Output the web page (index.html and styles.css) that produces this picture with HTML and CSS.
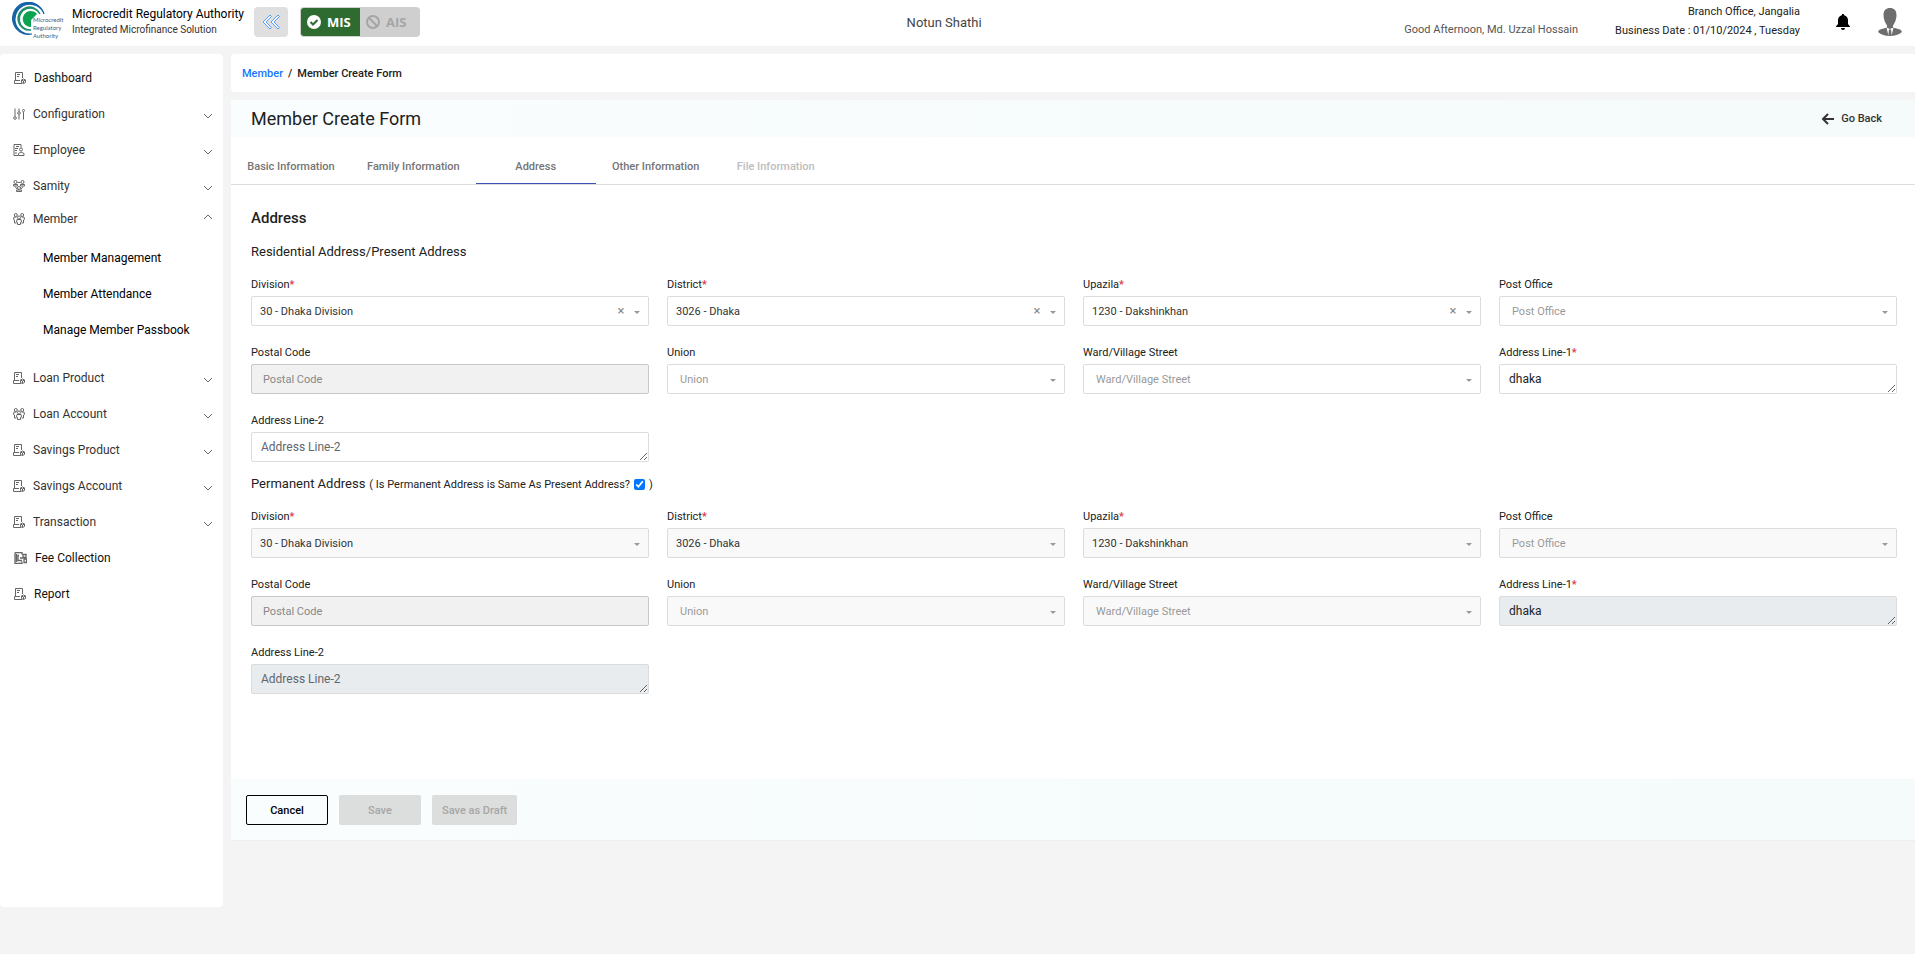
FILE: index.html
```
<!DOCTYPE html>
<html lang="en">
<head>
<meta charset="UTF-8">
<meta name="viewport" content="width=device-width, initial-scale=1.0">
<title>Member Create Form</title>
<link rel="stylesheet" href="styles.css">
</head>
<body>
    <!-- Icons shared by the menu -->
    <svg class="sprite" aria-hidden="true">
        <symbol id="i-doc" viewBox="0 0 12 12">
            <path d="M1.500 8V.5h7V6M.5 8.500v3H8M.5 8.500h5.500M3 2.500h3M3 4.500h2"/>
            <path d="M9.500 7l2 1v2.500l-2 1-2-1V8zM7.500 8l2 1 2-1M9.500 9v2.500"/>
        </symbol>
        <symbol id="i-sliders" viewBox="0 0 12 12">
            <path d="M2 .5v8M6 .5v3M6 6.500v5M10.500 4v7.500"/>
            <circle cx="2" cy="10" r="1.300"/><circle cx="6" cy="5" r="1.300"/><circle cx="10.500" cy="2.500" r="1"/>
        </symbol>
        <symbol id="i-employee" viewBox="0 0 12 12">
            <path d="M1 .5h7v3M1 .5v11h4M3 2.500h3M2 4.500h3M2 6.500h2M2 9h2"/>
            <circle cx="8" cy="5.500" r="1.500"/><path d="M5.500 11.500v-2l2.500-1.500 3 1.500v2z"/>
        </symbol>
        <symbol id="i-samity" viewBox="0 0 12 12">
            <circle cx="2.500" cy="2" r="1.500"/><circle cx="9.500" cy="2" r="1.500"/><circle cx="6" cy="8" r="1.500"/>
            <path d="M.5 6V4.500h4V6zM7.500 6V4.500h4V6zM3.500 11.500V10h5v1.500zM4.500 2.500h3M2 6.500l2 2.500M10 6.500L8 9"/>
        </symbol>
        <symbol id="i-people" viewBox="0 0 12 12">
            <circle cx="2.800" cy="2" r="1.500"/><circle cx="9.200" cy="2" r="1.500"/><circle cx="6" cy="4.500" r="1.500"/>
            <path d="M3.500 10h-2V7L.5 6.500 1 4h2.500M8.500 10h2V7l1-.5L11 4H8.500M4 6.500h4l.5 2.500-1 .5v2h-3v-2l-1-.5z"/>
        </symbol>
        <symbol id="i-fee" viewBox="0 0 13 12">
            <path d="M1 .5h7v2M1 .5v11h7v-2M2.500 2v8M5 3.500H4v5h4M6 6h3M9 2.500h3v3H9zM10 7h2.500v3.500H10z" stroke-width="1.300"/>
        </symbol>
        <symbol id="i-down" viewBox="0 0 10 6">
            <path d="M1 1l4 4 4-4"/>
        </symbol>
    </svg>

    <header class="topbar">
        <svg class="logo" viewBox="0 0 54 40" role="img" aria-label="Microcredit Regulatory Authority">
            <path d="M32 12A16 16 0 1 0 20 32A15 15 0 1 1 32 12z" fill="#1762a8" stroke="#1762a8" stroke-width="1.200"/>
            <path d="M28 12A11.500 11.500 0 1 0 19 28A11 11 0 1 1 28 12z" fill="#1d8f6a" stroke="#1d8f6a" stroke-width="1.400"/>
            <path d="M25 12A8 8 0 1 0 19 25V18z" fill="#0aa34f"/>
            <text x="21" y="20">Microcredit</text>
            <text x="21" y="28">Regulatory</text>
            <text x="21" y="36">Authority</text>
        </svg>
        <div class="brand">
            <div class="brand-name">Microcredit Regulatory Authority</div>
            <div class="brand-sub">Integrated Microfinance Solution</div>
        </div>
        <button class="collapse" type="button" aria-label="Collapse menu">
            <svg viewBox="0 0 20 16"><path d="M9 1L2 8l7 7 1.500-1.500L5 8l5.500-5.500zM17 1l-7 7 7 7 1.500-1.500L13 8l5.500-5.500z"/></svg>
        </button>
        <div class="modes">
            <button class="mode active" type="button">
                <svg viewBox="0 0 14 14"><circle cx="7" cy="7" r="7" fill="#fff"/><path d="M3.500 7l2.500 2.500 4.500-4.500" fill="none" stroke="#2e6b30" stroke-width="2"/></svg>
                MIS
            </button>
            <button class="mode" type="button" disabled>
                <svg viewBox="0 0 14 14" fill="none" stroke="#a5a5a5" stroke-width="2"><circle cx="7" cy="7" r="6"/><path d="M3 3l8 8"/></svg>
                AIS
            </button>
        </div>
        <div class="org">Notun Shathi</div>
        <div class="greeting">Good Afternoon, Md. Uzzal Hossain</div>
        <div class="office">
            <div>Branch Office, Jangalia</div>
            <div>Business Date : 01/10/2024 , Tuesday</div>
        </div>
        <button class="icon-btn bell" type="button" aria-label="Notifications">
            <svg viewBox="0 0 14 16"><path d="M7 0c.7 0 1.200.5 1.200 1.200C10.500 1.800 12 3.700 12 6v4l2 2.500V13H0v-.5L2 10V6c0-2.300 1.500-4.200 3.800-4.800C5.800.5 6.300 0 7 0zM5 14h4a2 2 0 0 1-4 0z"/></svg>
        </button>
        <button class="icon-btn avatar" type="button" aria-label="Account">
            <svg viewBox="0 0 24 28"><path d="M12 0c4 0 6.500 2.500 6.500 7 0 4-1.500 8-3.500 10.500v2l7 2c1 .5 1.500 1.500 2 2.500-3 2.500-7 4-12 4S3 26.500 0 24c.5-1 1-2 2-2.500l7-2v-2C7 15 5.500 11 5.500 7 5.500 2.500 8 0 12 0z"/><path d="M8.500 19.500L12 21l3.500-1.500L13.500 28h-3z" fill="#fff"/><path d="M11 21.500h2l.8 6.500h-3.600z"/></svg>
        </button>
    </header>

    <div class="layout">
        <nav class="sidebar" aria-label="Main menu">
            <a class="item link" href="#"><svg class="ico"><use href="#i-doc"/></svg><span>Dashboard</span></a>
            <a class="item" href="#"><svg class="ico"><use href="#i-sliders"/></svg><span>Configuration</span><svg class="caret"><use href="#i-down"/></svg></a>
            <a class="item" href="#"><svg class="ico"><use href="#i-employee"/></svg><span>Employee</span><svg class="caret"><use href="#i-down"/></svg></a>
            <a class="item" href="#"><svg class="ico"><use href="#i-samity"/></svg><span>Samity</span><svg class="caret"><use href="#i-down"/></svg></a>
            <a class="item open" href="#"><svg class="ico"><use href="#i-people"/></svg><span>Member</span><svg class="caret up"><use href="#i-down"/></svg></a>
            <div class="submenu">
                <a href="#">Member Management</a>
                <a href="#">Member Attendance</a>
                <a href="#">Manage Member Passbook</a>
            </div>
            <a class="item" href="#"><svg class="ico"><use href="#i-doc"/></svg><span>Loan Product</span><svg class="caret"><use href="#i-down"/></svg></a>
            <a class="item" href="#"><svg class="ico"><use href="#i-people"/></svg><span>Loan Account</span><svg class="caret"><use href="#i-down"/></svg></a>
            <a class="item" href="#"><svg class="ico"><use href="#i-doc"/></svg><span>Savings Product</span><svg class="caret"><use href="#i-down"/></svg></a>
            <a class="item" href="#"><svg class="ico"><use href="#i-doc"/></svg><span>Savings Account</span><svg class="caret"><use href="#i-down"/></svg></a>
            <a class="item" href="#"><svg class="ico"><use href="#i-doc"/></svg><span>Transaction</span><svg class="caret"><use href="#i-down"/></svg></a>
            <a class="item link" href="#"><svg class="ico wide"><use href="#i-fee"/></svg><span>Fee Collection</span></a>
            <a class="item link" href="#"><svg class="ico"><use href="#i-doc"/></svg><span>Report</span></a>
        </nav>

        <main class="content">
            <div class="breadcrumb">
                <a href="#">Member</a>
                <span class="sep">/</span>
                <span>Member Create Form</span>
            </div>

            <section class="card">
                <div class="card-head">
                    <h1>Member Create Form</h1>
                    <a class="back" href="#">
                        <svg viewBox="0 0 14 12"><path d="M7 1L2 6l5 5M2 6h11"/></svg>
                        Go Back
                    </a>
                </div>

                <div class="tabs" role="tablist">
                    <button type="button" role="tab">Basic Information</button>
                    <button type="button" role="tab">Family Information</button>
                    <button type="button" role="tab" class="selected" aria-selected="true">Address</button>
                    <button type="button" role="tab">Other Information</button>
                    <button type="button" role="tab" disabled>File Information</button>
                </div>

                <form class="form">
                    <h2>Address</h2>
                    <h3>Residential Address/Present Address</h3>
                    <div class="grid">
                        <div class="field">
                            <label for="division">Division<b>*</b></label>
                            <div class="select">
                                <select id="division"><option>30 - Dhaka Division</option></select>
                                <button class="clear" type="button" aria-label="Clear division">×</button>
                            </div>
                        </div>
                        <div class="field">
                            <label for="district">District<b>*</b></label>
                            <div class="select">
                                <select id="district"><option>3026 - Dhaka</option></select>
                                <button class="clear" type="button" aria-label="Clear district">×</button>
                            </div>
                        </div>
                        <div class="field">
                            <label for="upazila">Upazila<b>*</b></label>
                            <div class="select">
                                <select id="upazila"><option>1230 - Dakshinkhan</option></select>
                                <button class="clear" type="button" aria-label="Clear upazila">×</button>
                            </div>
                        </div>
                        <div class="field">
                            <label for="post-office">Post Office</label>
                            <div class="select">
                                <select id="post-office" class="empty"><option>Post Office</option></select>
                            </div>
                        </div>
                        <div class="field">
                            <label for="postal-code">Postal Code</label>
                            <input id="postal-code" type="text" placeholder="Postal Code" disabled>
                        </div>
                        <div class="field">
                            <label for="union">Union</label>
                            <div class="select">
                                <select id="union" class="empty"><option>Union</option></select>
                            </div>
                        </div>
                        <div class="field">
                            <label for="ward">Ward/Village Street</label>
                            <div class="select">
                                <select id="ward" class="empty"><option>Ward/Village Street</option></select>
                            </div>
                        </div>
                        <div class="field">
                            <label for="line1">Address Line-1<b>*</b></label>
                            <textarea id="line1" rows="1">dhaka</textarea>
                        </div>
                        <div class="field">
                            <label for="line2">Address Line-2</label>
                            <textarea id="line2" rows="1" placeholder="Address Line-2"></textarea>
                        </div>
                    </div>

                    <div class="permanent">
                        <h3>Permanent Address</h3>
                        <label for="same">( Is Permanent Address is Same As Present Address?</label>
                        <input id="same" type="checkbox" checked>
                        <span>)</span>
                    </div>
                    <div class="grid">
                        <div class="field">
                            <label for="p-division">Division<b>*</b></label>
                            <div class="select">
                                <select id="p-division" disabled><option>30 - Dhaka Division</option></select>
                            </div>
                        </div>
                        <div class="field">
                            <label for="p-district">District<b>*</b></label>
                            <div class="select">
                                <select id="p-district" disabled><option>3026 - Dhaka</option></select>
                            </div>
                        </div>
                        <div class="field">
                            <label for="p-upazila">Upazila<b>*</b></label>
                            <div class="select">
                                <select id="p-upazila" disabled><option>1230 - Dakshinkhan</option></select>
                            </div>
                        </div>
                        <div class="field">
                            <label for="p-post-office">Post Office</label>
                            <div class="select">
                                <select id="p-post-office" class="empty" disabled><option>Post Office</option></select>
                            </div>
                        </div>
                        <div class="field">
                            <label for="p-postal-code">Postal Code</label>
                            <input id="p-postal-code" type="text" placeholder="Postal Code" disabled>
                        </div>
                        <div class="field">
                            <label for="p-union">Union</label>
                            <div class="select">
                                <select id="p-union" class="empty" disabled><option>Union</option></select>
                            </div>
                        </div>
                        <div class="field">
                            <label for="p-ward">Ward/Village Street</label>
                            <div class="select">
                                <select id="p-ward" class="empty" disabled><option>Ward/Village Street</option></select>
                            </div>
                        </div>
                        <div class="field">
                            <label for="p-line1">Address Line-1<b>*</b></label>
                            <textarea id="p-line1" rows="1" disabled>dhaka</textarea>
                        </div>
                        <div class="field">
                            <label for="p-line2">Address Line-2</label>
                            <textarea id="p-line2" rows="1" placeholder="Address Line-2" disabled></textarea>
                        </div>
                    </div>
                </form>

                <div class="actions">
                    <button class="cancel" type="button">Cancel</button>
                    <button type="button" disabled>Save</button>
                    <button type="button" disabled>Save as Draft</button>
                </div>
            </section>
        </main>
    </div>
</body>
</html>
```
FILE: styles.css
```
* {
    box-sizing: border-box;
}

body {
    margin: 0;
    background: #f4f4f4;
    color: #212121;
    font-family: Roboto, "Liberation Sans", sans-serif;
    font-size: 12px;
}

button, input, select, textarea {
    font-family: inherit;
    font-size: inherit;
}

a {
    color: inherit;
    text-decoration: none;
}

.sprite {
    display: none;
}

/* Top bar */
.topbar {
    display: flex;
    align-items: center;
    height: 46px;
    padding: 0 13px 2px 12px;
    background: #fff;
}

.logo {
    width: 54px;
    height: 40px;
}

.logo text {
    font: 6px Lato, sans-serif;
    fill: #3b5b7d;
}

.brand {
    margin-left: 6px;
    width: 182px;
    white-space: nowrap;
}

.brand-name {
    font-size: 12px;
    line-height: 16px;
    color: #000;
}

.brand-sub {
    font-size: 10px;
    line-height: 16px;
    color: #333;
}

.collapse {
    width: 34px;
    height: 30px;
    padding: 0;
    border: 0;
    border-radius: 4px;
    background: #dfdfdf;
}

.collapse svg {
    display: block;
    width: 20px;
    height: 16px;
    margin: auto;
    fill: #f4f8ff;
    stroke: #5c9cf5;
}

.modes {
    display: flex;
    margin-left: 12px;
    padding: 1px;
    border-radius: 4px;
    background: #cfcfcf;
}

.mode {
    display: flex;
    align-items: center;
    gap: 6px;
    width: 59px;
    height: 28px;
    padding: 0 0 0 6px;
    border: 0;
    border-radius: 3px 0 0 3px;
    background: none;
    color: #a5a5a5;
    font: bold 13px "Open Sans", sans-serif;
}

.mode.active {
    background: #2e6b30;
    color: #fff;
}

.mode svg {
    width: 14px;
    height: 14px;
}

.org {
    flex: 1;
    padding-left: 64px;
    text-align: center;
    font-size: 13px;
    color: #444;
}

.greeting {
    padding-top: 15px;
    margin-right: 37px;
    font-size: 11px;
    color: #555;
}

.office {
    text-align: right;
    font-size: 11px;
    line-height: 19px;
    padding-bottom: 2px;
}

.icon-btn {
    padding: 0;
    border: 0;
    background: none;
}

.icon-btn svg {
    display: block;
}

.bell {
    margin: 0 28px 0 36px;
}

.bell svg {
    width: 14px;
    height: 16px;
}

.avatar svg {
    width: 24px;
    height: 28px;
    fill: #6d6e70;
}

/* Page */
.layout {
    display: flex;
    align-items: flex-start;
    gap: 8px;
    padding-top: 8px;
}

.sidebar {
    flex: 0 0 223px;
    min-height: 853px;
    padding: 6px 10px 0 13px;
    border-radius: 4px;
    background: #fff;
}

.item {
    display: flex;
    align-items: center;
    height: 36px;
    gap: 8px;
    color: #333;
}

.item.link {
    color: #111;
    padding-left: 1px;
}

.item.open {
    height: 30px;
}

.ico {
    width: 12px;
    height: 12px;
    fill: none;
    stroke: #666;
}

.ico.wide {
    width: 13px;
}

.caret {
    width: 10px;
    height: 6px;
    margin: 4px 0 0 auto;
    fill: none;
    stroke: #666;
}

.caret.up {
    margin: 0 0 4px auto;
    transform: rotate(180deg);
}

.submenu {
    padding: 6px 0 12px 30px;
}

.submenu a {
    display: block;
    font-size: 12px;
    line-height: 36px;
    color: #000;
}

.content {
    flex: 1;
    min-width: 0;
}

.breadcrumb {
    display: flex;
    align-items: center;
    gap: 5px;
    height: 38px;
    padding-left: 11px;
    margin-bottom: 8px;
    border-radius: 4px 0 0 4px;
    background: #fff;
    font-size: 11px;
    font-weight: 500;
}

.breadcrumb a {
    color: #1677ff;
}

.card {
    background: #fff;
}

.card-head {
    display: flex;
    align-items: center;
    justify-content: space-between;
    height: 37px;
    padding: 0 33px 0 20px;
    background: linear-gradient(90deg, #f9fdfe, #f5fafb);
}

.card-head h1 {
    margin: 0;
    font-size: 18px;
    line-height: 20px;
    font-weight: 400;
}

.back {
    display: flex;
    align-items: center;
    gap: 6px;
    font-size: 11px;
    font-weight: 500;
    color: #333;
}

.back svg {
    width: 14px;
    height: 12px;
    fill: none;
    stroke: #333;
    stroke-width: 2;
}

.tabs {
    display: flex;
    height: 48px;
    border-bottom: 1px solid #dcdcdc;
}

.tabs button {
    min-width: 120px;
    padding: 12px 16px 0;
    border: 0;
    border-bottom: 1px solid transparent;
    background: none;
    color: #757575;
    font-size: 11px;
    font-weight: 500;
}

.tabs .selected {
    border-bottom-color: #3f51b5;
}

.tabs button:disabled {
    color: #bdbdbd;
}

/* Address form */
.form {
    padding: 22px 18px 85px 20px;
}

.form h2 {
    margin: 0 0 13px;
    font-size: 15px;
    line-height: 22px;
    font-weight: 500;
}

.form h3 {
    margin: 0;
    font-size: 13px;
    line-height: 20px;
    font-weight: 400;
}

.grid {
    display: grid;
    grid-template-columns: repeat(4, 1fr);
    gap: 18px;
    padding-top: 14px;
}

.field label {
    display: block;
    margin-bottom: 2px;
    font-size: 11px;
    line-height: 18px;
}

.field b {
    color: #dc3545;
    font-weight: 500;
}

.select {
    position: relative;
}

.select::after {
    content: "";
    position: absolute;
    top: 15px;
    right: 9px;
    border: 3px solid transparent;
    border-top-color: #999;
    border-bottom: 0;
}

.field select, .field input, .field textarea {
    display: block;
    width: 100%;
    height: 30px;
    margin: 0;
    border: 1px solid #dcdcdc;
    border-radius: 2px;
    background: #fff;
    color: #333;
    font-size: 11px;
    opacity: 1;
}

.field select {
    appearance: none;
    padding: 0 40px 0 8px;
}

.field select.empty {
    padding-left: 12px;
    color: #999;
}

.field select:disabled {
    background: #f9f9f9;
}

.field input {
    padding: 0 11px;
    border-color: #c8c8c8;
    background: #f1f1f1;
}

.field input::placeholder {
    color: #888;
}

.field textarea {
    padding: 4px 9px;
    font-size: 12px;
    line-height: 20px;
    color: #212529;
    overflow: hidden;
}

.field textarea::placeholder {
    color: #5f666d;
}

.field textarea:disabled {
    background: #e9ecef;
}

.clear {
    position: absolute;
    top: 7px;
    right: 22px;
    width: 12px;
    padding: 0;
    border: 0;
    background: none;
    color: #888;
    font-size: 13px;
    line-height: 15px;
}

.permanent {
    display: flex;
    align-items: center;
    gap: 4px;
    padding-top: 12px;
    font-size: 11px;
}

.permanent input {
    width: 11px;
    height: 11px;
    margin: 0;
    accent-color: #0075ff;
}

.actions {
    display: flex;
    gap: 11px;
    padding: 16px 15px 15px;
    border-bottom: 1px solid #eee;
    background: linear-gradient(90deg, #f9fdfe, #f5fafb);
}

.actions button {
    min-width: 82px;
    height: 30px;
    padding: 0 10px;
    border: 0;
    border-radius: 2px;
    background: #dcdddd;
    color: #a6a6a6;
    font-size: 11px;
    font-weight: 500;
}

.actions .cancel {
    border: 1px solid #000;
    background: none;
    color: #000;
}
```
